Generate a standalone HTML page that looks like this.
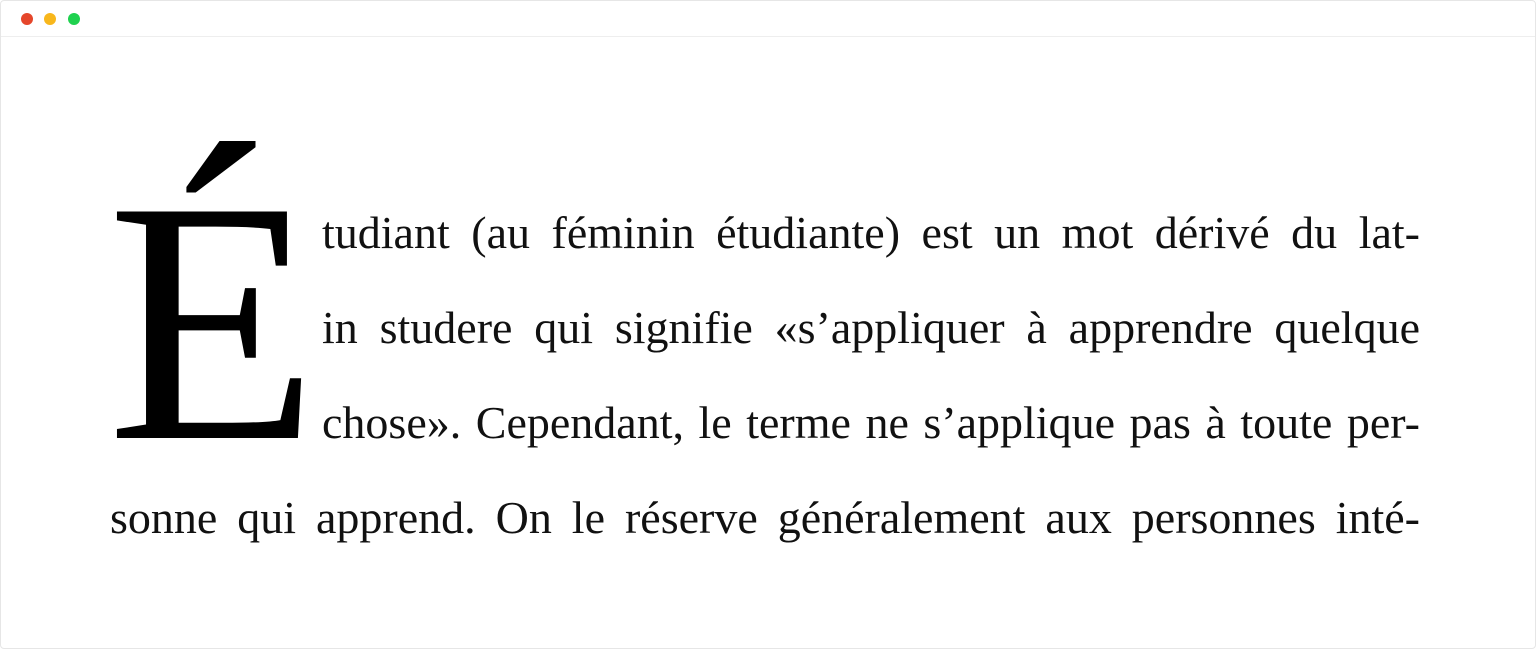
<!DOCTYPE html>
<html><head><meta charset="utf-8"><style>
html,body{margin:0;padding:0;background:#fff}
body{width:1536px;height:649px;position:relative;overflow:hidden;font-family:"Liberation Serif",serif;color:#111}
.frame{position:absolute;left:0;top:0;width:1534px;height:647px;border:1px solid #e6e6e6;border-radius:4px}
.bar{position:absolute;left:1px;top:36px;width:1534px;height:1px;background:#eeeeee}
.dot{position:absolute;top:13px;width:12px;height:12px;border-radius:50%}
.cap{position:absolute;left:107px;top:149px;font-size:346px;line-height:1;color:#000}
.l{position:absolute;font-size:46px;line-height:95px;height:95px;white-space:nowrap;text-align:justify;text-align-last:justify}
</style></head><body>
<div class="frame"></div>
<div class="bar"></div>
<div class="dot" style="left:21px;background:#e5462b"></div>
<div class="dot" style="left:44px;background:#f8b71c"></div>
<div class="dot" style="left:68px;background:#1fd14f"></div>
<div class="cap">É</div>
<div class="l" style="left:322px;width:1098px;top:185px">tudiant (au féminin étudiante) est un mot dérivé du lat-</div>
<div class="l" style="left:322px;width:1098px;top:280px">in studere qui signifie «s’appliquer à apprendre quelque</div>
<div class="l" style="left:322px;width:1098px;top:375px">chose». Cependant, le terme ne s’applique pas à toute per-</div>
<div class="l" style="left:110px;width:1310px;top:470px">sonne qui apprend. On le réserve généralement aux personnes inté-</div>
</body></html>
